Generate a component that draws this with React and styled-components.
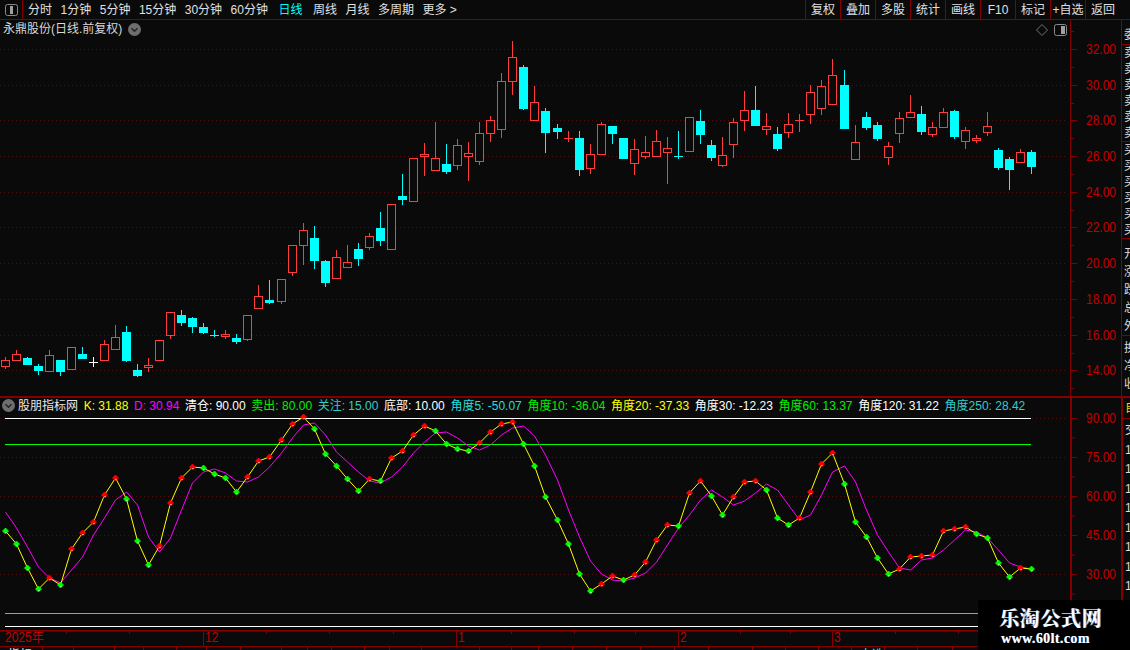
import React from 'react';
import styled, { createGlobalStyle } from 'styled-components';

const GlobalStyle = createGlobalStyle`
  html, body {
    margin: 0;
    background: #0a0a0a;
  }
`;

const RED_LINE = '#840000';
const AXIS_TEXT = '#c00000';
const UP = '#ff3c3c';
const DOWN = '#00ffff';
const FONT = '"Liberation Sans", "Noto Sans CJK SC", sans-serif';

const Page = styled.div`
  position: relative;
  width: 1130px;
  height: 650px;
  overflow: hidden;
  display: flex;
  flex-direction: column;
  background: #0a0a0a;
  color: #e0e0e0;
  font: 12px/1 ${FONT};
`;

const TopBar = styled.div`
  flex: none;
  height: 19px;
  display: flex;
  align-items: center;
  border-bottom: 1px solid ${RED_LINE};
`;

const ToggleBox = styled.div`
  flex: none;
  width: 23px;
  height: 19px;
  display: flex;
  align-items: center;
  justify-content: center;
  box-sizing: border-box;
  border-right: 1px solid ${RED_LINE};
`;

const Tabs = styled.div`
  display: flex;
  gap: 8.5px;
  padding-left: 5px;
`;

const Tab = styled.span`
  white-space: nowrap;
  color: ${(p) => (p.$active ? '#00ffff' : '#e0e0e0')};
  margin: ${(p) => (p.$active ? '0 2px' : '0')};
`;

const ToolButtons = styled.div`
  display: flex;
  margin-left: auto;
  margin-right: 10px;
`;

const ToolButton = styled.div`
  width: 35px;
  height: 19px;
  box-sizing: border-box;
  display: flex;
  align-items: center;
  justify-content: center;
  white-space: nowrap;
  border-left: 1px solid ${RED_LINE};
`;

const Pane = styled.div`
  flex: none;
  display: flex;
  height: ${(p) => p.$height}px;
  border-bottom: ${(p) => p.$rule}px solid ${RED_LINE};
`;

const ChartArea = styled.div`
  position: relative;
  width: 1070px;
  flex: none;
  svg {
    display: block;
  }
`;

const AxisBox = styled.div`
  flex: none;
  width: 51px;
  box-sizing: border-box;
  border-left: ${(p) => p.$rule}px solid ${RED_LINE};
  svg {
    display: block;
  }
`;

const Strip = styled.div`
  flex: none;
  width: 9px;
  box-sizing: border-box;
  overflow: hidden;
  border-left: ${(p) => p.$rule}px solid ${RED_LINE};
  display: flex;
  flex-direction: column;
`;

const StripSection = styled.div`
  flex: none;
  height: ${(p) => p.$height}px;
  box-sizing: border-box;
  overflow: hidden;
  padding: ${(p) => p.$top}px 0 0 2px;
  border-bottom: ${(p) => (p.$open ? 'none' : `1px solid ${RED_LINE}`)};
`;

const StripRow = styled.div`
  height: ${(p) => p.$step}px;
  line-height: ${(p) => p.$step}px;
  white-space: nowrap;
  color: ${(p) => p.$color || '#dcdcdc'};
`;

const ChartTitle = styled.div`
  position: absolute;
  left: 3px;
  top: 3px;
  display: flex;
  align-items: center;
  gap: 6px;
  height: 12px;
  color: #d8d8d8;
  white-space: nowrap;
`;

const ChartTools = styled.div`
  position: absolute;
  right: 3px;
  top: 4px;
  display: flex;
  align-items: center;
  gap: 6px;
`;

const Legend = styled.div`
  position: absolute;
  left: 2px;
  top: 1px;
  height: 13px;
  display: flex;
  align-items: center;
  gap: 5.65px;
  white-space: nowrap;
`;

const LegendItem = styled.span`
  color: ${(p) => p.$color};
`;

const LegendName = styled.span`
  margin-left: -2.65px;
  color: #e8e8e8;
`;

const DateAxis = styled.div`
  flex: none;
  height: 16px;
  border-bottom: 1px solid ${RED_LINE};
  svg {
    display: block;
  }
`;

const BottomTabs = styled.div`
  flex: 1;
  display: flex;
  overflow: hidden;
`;

const BottomTab = styled.div`
  flex: none;
  width: ${(p) => p.$width}px;
  box-sizing: border-box;
  padding: 2px 0 0 8px;
  white-space: nowrap;
  overflow: hidden;
  color: ${(p) => (p.$active ? '#00ffff' : '#e8e8e8')};
  border-right: 1px solid ${RED_LINE};
`;

const Watermark = styled.div`
  position: absolute;
  left: 978px;
  top: 600px;
  width: 152px;
  height: 50px;
  background: #000;
  color: #fff;
  font-family: "Liberation Serif", "Noto Serif CJK SC", "Noto Sans CJK SC", serif;
  font-weight: 700;
`;

const WatermarkName = styled.div`
  margin: 9px 0 0 21px;
  font-size: 20px;
  line-height: 20px;
  letter-spacing: 0.6px;
  white-space: nowrap;
  text-shadow: 1px 0 0 #6f8fd0;
`;

const WatermarkUrl = styled.div`
  margin: 3px 0 0 23px;
  font-size: 14px;
  line-height: 14px;
  letter-spacing: 0.4px;
  white-space: nowrap;
  text-shadow: 0.5px 0 0 #6f8fd0;
`;

// [wick top, wick bottom, body top, body bottom, kind]
const candles = [
  [357, 369, 360, 367, 'r'], [350, 361, 354, 361, 'r'], [357, 365, 358, 365, 'c'], [364, 375, 366, 371, 'c'],
  [350, 372, 355, 372, 'r'], [360, 376, 360, 372, 'c'], [347, 370, 347, 370, 'r'], [347, 359, 354, 359, 'c'],
  [357, 367, 362, 362, 'w'], [340, 361, 344, 361, 'r'], [325, 350, 337, 350, 'r'], [326, 362, 332, 361, 'c'],
  [364, 377, 370, 376, 'c'], [358, 372, 365, 368, 'r'], [340, 361, 340, 361, 'r'], [312, 339, 312, 336, 'r'],
  [310, 326, 315, 323, 'c'], [317, 333, 318, 327, 'c'], [323, 334, 327, 333, 'c'], [330, 337, 335, 335, 'c'],
  [330, 339, 334, 337, 'r'], [334, 344, 338, 342, 'c'], [315, 341, 315, 340, 'r'], [285, 309, 296, 309, 'r'],
  [280, 304, 300, 303, 'c'], [279, 304, 279, 302, 'r'], [245, 276, 245, 273, 'r'], [223, 265, 230, 246, 'r'],
  [226, 269, 238, 261, 'c'], [260, 287, 261, 283, 'c'], [250, 279, 257, 279, 'r'], [245, 268, 262, 268, 'r'],
  [243, 266, 249, 259, 'c'], [233, 250, 236, 248, 'r'], [212, 246, 228, 241, 'c'], [204, 250, 204, 250, 'r'],
  [174, 205, 196, 200, 'c'], [158, 202, 158, 202, 'r'], [143, 176, 154, 157, 'r'], [122, 171, 158, 171, 'r'],
  [144, 174, 164, 172, 'c'], [139, 170, 145, 166, 'r'], [142, 181, 153, 157, 'r'], [122, 165, 133, 162, 'r'],
  [116, 142, 120, 134, 'r'], [73, 138, 81, 130, 'r'], [41, 95, 57, 82, 'r'], [65, 110, 67, 109, 'c'],
  [86, 121, 102, 121, 'r'], [108, 153, 111, 133, 'c'], [124, 139, 128, 132, 'c'], [131, 142, 138, 138, 'r'],
  [131, 176, 138, 170, 'c'], [144, 174, 154, 169, 'r'], [122, 155, 124, 155, 'r'], [126, 144, 126, 134, 'c'],
  [138, 159, 138, 159, 'c'], [139, 175, 149, 164, 'r'], [136, 159, 152, 157, 'r'], [130, 157, 141, 157, 'r'],
  [137, 184, 148, 153, 'r'], [131, 159, 156, 156, 'c'], [117, 152, 117, 152, 'r'], [110, 144, 121, 135, 'c'],
  [140, 161, 145, 158, 'c'], [137, 167, 155, 166, 'r'], [118, 158, 122, 145, 'r'], [91, 131, 110, 121, 'r'],
  [86, 126, 110, 126, 'c'], [113, 135, 126, 130, 'r'], [127, 151, 134, 149, 'c'], [113, 138, 124, 133, 'r'],
  [114, 132, 120, 120, 'r'], [85, 124, 92, 115, 'r'], [80, 115, 86, 109, 'r'], [59, 105, 75, 105, 'r'],
  [70, 129, 85, 129, 'c'], [125, 160, 142, 160, 'r'], [112, 130, 117, 128, 'c'], [122, 141, 125, 139, 'c'],
  [142, 165, 146, 158, 'r'], [112, 143, 118, 134, 'r'], [95, 118, 112, 118, 'r'], [106, 135, 114, 132, 'c'],
  [122, 137, 127, 135, 'r'], [108, 128, 112, 128, 'r'], [110, 139, 111, 137, 'c'], [127, 149, 130, 142, 'r'],
  [135, 143, 138, 141, 'r'], [112, 136, 126, 133, 'r'], [148, 170, 150, 168, 'c'], [157, 190, 159, 170, 'c'],
  [149, 163, 152, 163, 'r'], [150, 174, 152, 167, 'c'],
];

const kLine = [
  531, 544, 568, 589, 578, 585, 549, 533, 522, 495, 478, 499, 541, 565, 546, 503, 478, 467, 468, 474,
  478, 492, 477, 461, 457, 440, 424, 417, 429, 454, 466, 479, 491, 479, 481, 458, 451, 435, 426, 431,
  444, 449, 451, 443, 432, 424, 422, 444, 466, 497, 520, 544, 574, 591, 584, 576, 580, 575, 562, 540,
  525, 526, 493, 481, 496, 515, 497, 482, 481, 490, 518, 525, 518, 492, 464, 453, 484, 522, 537, 558,
  574, 569, 557, 556, 555, 531, 529, 527, 534, 538, 563, 577, 568, 569,
];

const dLine = [
  512, 528, 547, 567, 578, 583, 570, 557, 535, 518, 500, 492, 505, 537, 552, 538, 510, 483, 472, 469,
  473, 481, 482, 477, 467, 453, 438, 425, 423, 435, 452, 462, 472, 481, 483, 477, 467, 453, 442, 433,
  432, 438, 446, 450, 445, 435, 428, 426, 436, 455, 480, 510, 537, 561, 574, 580, 581, 578, 573, 562,
  545, 528, 515, 500, 490, 497, 505, 501, 493, 484, 490, 505, 520, 515, 495, 472, 466, 482, 510, 535,
  552, 568, 570, 560, 558, 550, 540, 530, 532, 538, 550, 563, 567, 569,
];

const priceLevels = [
  ['32.00', 49], ['30.00', 85], ['28.00', 120], ['26.00', 156], ['24.00', 192],
  ['22.00', 227], ['20.00', 263], ['18.00', 299], ['16.00', 335], ['14.00', 370],
];

const kdjLevels = [
  ['90.00', 418], ['75.00', 457], ['60.00', 496], ['45.00', 535], ['30.00', 574],
];

const xAt = (i) => Math.floor(5 + 11.04 * i);

const colourOf = { r: UP, c: DOWN, w: '#ffffff' };

const Candle = ({ data, i }) => {
  const [wickTop, wickBottom, bodyTop, bodyBottom, kind] = data;
  const x = xAt(i) + 0.5;
  const colour = colourOf[kind];
  const height = bodyBottom - bodyTop;
  return (
    <g stroke={colour} shapeRendering="crispEdges">
      <line x1={x} x2={x} y1={wickTop} y2={bodyTop} />
      <line x1={x} x2={x} y1={bodyBottom} y2={wickBottom} />
      {height === 0 ? (
        <line x1={x - 4.5} x2={x + 4.5} y1={bodyTop + 0.5} y2={bodyTop + 0.5} />
      ) : kind === 'c' ? (
        <rect x={x - 4.5} y={bodyTop} width={9} height={height} fill={colour} stroke="none" />
      ) : (
        <rect x={x - 4} y={bodyTop + 0.5} width={8} height={height - 1} fill="#0a0a0a" />
      )}
    </g>
  );
};

const DottedLevel = ({ y, width = 1067 }) => (
  <line x1={0} x2={width} y1={y + 0.5} y2={y + 0.5} stroke="#4e0c0c" strokeDasharray="1 3" shapeRendering="crispEdges" />
);

const PriceChart = () => (
  <svg width="1070" height="376" viewBox="0 20 1070 376">
    {priceLevels.map(([label, y]) => <DottedLevel key={label} y={y} />)}
    {candles.map((c, i) => <Candle key={i} data={c} i={i} />)}
  </svg>
);

const HLine = ({ y, colour }) => (
  <line x1={5} x2={1031} y1={y + 0.5} y2={y + 0.5} stroke={colour} shapeRendering="crispEdges" />
);

const KdjChart = () => {
  const points = (line) => line.map((y, i) => `${xAt(i) + 0.5},${y}`).join(' ');
  return (
    <svg width="1070" height="232" viewBox="0 398 1070 232">
      {kdjLevels.map(([label, y]) => <DottedLevel key={label} y={y} />)}
      <HLine y={418} colour="#ffffff" />
      <HLine y={444} colour="#00ff00" />
      <HLine y={613} colour="#33cccc" />
      <HLine y={626} colour="#ffffff" />
      <polyline points={points(dLine)} fill="none" stroke="#ff00ff" />
      <polyline points={points(kLine)} fill="none" stroke="#ffff00" />
      {kLine.map((y, i) => {
        const x = xAt(i) + 0.5;
        const rising = i > 0 && y < kLine[i - 1];
        return (
          <g key={i}>
            <polygon
              points={`${x - 3},${y} ${x},${y - 3} ${x + 3},${y} ${x},${y + 3}`}
              fill={rising ? '#ff0000' : '#00ff00'}
              stroke={rising ? '#ff0000' : '#00ff00'}
              strokeWidth="0.8"
            />
            <rect x={x} y={y + 1} width={1} height={1} fill="#ffffff" />
          </g>
        );
      })}
    </svg>
  );
};

// values on the axis are drawn 10px tall on a 12px width
const AxisLabel = ({ x, y, anchor = 'end', children }) => (
  <text
    transform={`translate(${x} ${y}) scale(1 1.15)`}
    textAnchor={anchor}
    fill={AXIS_TEXT}
    fontSize="12"
    fontFamily={FONT}
  >
    {children}
  </text>
);

const PriceAxis = () => (
  <svg width="50" height="376" viewBox="1071 20 50 376">
    {priceLevels.map(([label, y], i) => (
      <g key={label}>
        <line x1={1071} x2={1077} y1={y + 0.5} y2={y + 0.5} stroke={RED_LINE} />
        {i < priceLevels.length - 1 && (
          <line x1={1071} x2={1074} y1={Math.round((y + priceLevels[i + 1][1]) / 2) + 0.5} y2={Math.round((y + priceLevels[i + 1][1]) / 2) + 0.5} stroke={RED_LINE} />
        )}
        <AxisLabel x={1116} y={y + 5}>{label}</AxisLabel>
      </g>
    ))}
    <line x1={1071} x2={1074} y1={31.5} y2={31.5} stroke={RED_LINE} />
    <line x1={1071} x2={1074} y1={388.5} y2={388.5} stroke={RED_LINE} />
  </svg>
);

const KdjAxis = () => (
  <svg width="49" height="232" viewBox="1072 398 49 232">
    {kdjLevels.map(([label, y]) => (
      <g key={label}>
        <line x1={1072} x2={1077} y1={y + 0.5} y2={y + 0.5} stroke={RED_LINE} />
        <line x1={1072} x2={1075} y1={y + 20} y2={y + 20} stroke={RED_LINE} />
        <AxisLabel x={1116} y={y + 5}>{label}</AxisLabel>
      </g>
    ))}
  </svg>
);

const DateChart = () => (
  <svg width="1130" height="16" viewBox="0 630 1130 16">
    <line x1={0} x2={1130} y1={630.5} y2={630.5} stroke={RED_LINE} strokeWidth="2" />
    {[
      [203, '12'], [456, '1'], [678, '2'], [832, '3'],
    ].map(([x, label]) => (
      <g key={x}>
        <line x1={x + 0.5} x2={x + 0.5} y1={631} y2={646} stroke={RED_LINE} />
        <AxisLabel x={x + 2} y={642} anchor="start">{label}</AxisLabel>
      </g>
    ))}
    {[66, 129, 266, 329, 393, 511, 574, 635, 740, 790, 895, 958].map((x) => (
      <line key={x} x1={x + 0.5} x2={x + 0.5} y1={631} y2={634} stroke={RED_LINE} />
    ))}
    <AxisLabel x={5} y={642} anchor="start">2025年</AxisLabel>
  </svg>
);

const ChevronBadge = () => (
  <svg width="13" height="13" viewBox="0 0 13 13">
    <circle cx="6.5" cy="6.5" r="6.5" fill="#6e6e6e" />
    <path d="M3.5 5.2 L6.5 8.2 L9.5 5.2" fill="none" stroke="#222" strokeWidth="1.4" />
  </svg>
);

const SplitIcon = ({ side }) => (
  <svg width="13" height="12" viewBox="0 0 13 12">
    <rect x="0.5" y="0.5" width="12" height="11" rx="2" fill="#0a0a0a" stroke="#8a8a8a" />
    <rect x={side === 'left' ? 5 : 7} y="2" width={side === 'left' ? 3 : 4} height="8" fill="#a0a0a0" />
  </svg>
);

const DiamondIcon = () => (
  <svg width="12" height="12" viewBox="0 0 12 12">
    <path d="M6 0.5 L11.5 6 L6 11.5 L0.5 6 Z" fill="none" stroke="#707070" />
  </svg>
);

const periodTabs = ['分时', '1分钟', '5分钟', '15分钟', '30分钟', '60分钟', '日线', '周线', '月线', '多周期', '更多 >'];
const toolButtons = ['复权', '叠加', '多股', '统计', '画线', 'F10', '标记', '+自选', '返回'];

const legendItems = [
  ['K: 31.88', '#ffff00'],
  ['D: 30.94', '#ff00ff'],
  ['清仓: 90.00', '#ffffff'],
  ['卖出: 80.00', '#00ee00'],
  ['关注: 15.00', '#33cccc'],
  ['底部: 10.00', '#ffffff'],
  ['角度5: -50.07', '#22dddd'],
  ['角度10: -36.04', '#00ee00'],
  ['角度20: -37.33', '#ffff00'],
  ['角度30: -12.23', '#ffffff'],
  ['角度60: 13.37', '#00ee00'],
  ['角度120: 31.22', '#ffffff'],
  ['角度250: 28.42', '#33cccc'],
];

const priceStrip = [
  { height: 25, top: 7, step: 16, rows: ['委'] },
  { height: 97, top: 0, step: 16, rows: ['卖', '卖', '卖', '卖', '卖', '卖'] },
  { height: 97, top: 0, step: 16, rows: ['买', '买', '买', '买', '买', '买'] },
  { height: 97, top: 6, step: 18, rows: ['开', '涨', '跌', '总', '外'] },
  { height: 60, top: 3, step: 18, rows: ['换', '净', '收'], open: true },
];

const kdjStrip = ['1', '1', '1', '1', '1', '1', '1', '1', '1', '1'];

const bottomTabs = [
  ['指标', 43], ['RSI', 31], ['MACD', 41], ['WR', 29], ['KDJ', 33], ['VR', 30], ['OBV', 34], ['BOLL', 41],
  ['VR', 26], ['BR', 24], ['BIAS', 33], ['AR', 25], ['DMI', 32], ['DMA', 58], ['PSY', 32], ['CR', 27],
  ['MTM', 34], ['BBI', 34], ['ASI', 34], ['CCI', 34], ['EMV', 34], ['WVAD', 44], ['CYR', 33],
  ['SKDJ', 33], ['TRIX', 33], ['自选', 33, true], ['MA', 33], ['VOL', 35], ['BBI', 35], ['KD', 35],
];

const App = () => (
  <Page>
    <GlobalStyle />
    <TopBar>
      <ToggleBox><SplitIcon side="left" /></ToggleBox>
      <Tabs>
        {periodTabs.map((t) => <Tab key={t} $active={t === '日线'}>{t}</Tab>)}
      </Tabs>
      <ToolButtons>
        {toolButtons.map((t) => <ToolButton key={t}>{t}</ToolButton>)}
      </ToolButtons>
    </TopBar>

    <Pane $height={376} $rule={2}>
      <ChartArea>
        <PriceChart />
        <ChartTitle>永鼎股份(日线.前复权)<ChevronBadge /></ChartTitle>
        <ChartTools>
          <DiamondIcon />
          <SplitIcon side="right" />
        </ChartTools>
      </ChartArea>
      <AxisBox $rule={1}><PriceAxis /></AxisBox>
      <Strip $rule={1}>
        {priceStrip.map((s, i) => (
          <StripSection key={i} $height={s.height} $top={s.top} $open={s.open}>
            {s.rows.map((r, j) => <StripRow key={j} $step={s.step}>{r}</StripRow>)}
          </StripSection>
        ))}
      </Strip>
    </Pane>

    <Pane $height={232} $rule={0}>
      <ChartArea>
        <KdjChart />
        <Legend>
          <ChevronBadge />
          <LegendName>股朋指标网</LegendName>
          {legendItems.map(([text, colour]) => <LegendItem key={text} $color={colour}>{text}</LegendItem>)}
        </Legend>
      </ChartArea>
      <AxisBox $rule={2}><KdjAxis /></AxisBox>
      <Strip $rule={2}>
        <StripSection $height={21} $top={3}><StripRow $step={14} $color="#e0e000">自</StripRow></StripSection>
        <StripSection $height={211} $top={2} $open>
          <StripRow $step={19.5}>交</StripRow>
          {kdjStrip.map((r, i) => <StripRow key={i} $step={19.5}>{r}</StripRow>)}
        </StripSection>
      </Strip>
    </Pane>

    <DateAxis><DateChart /></DateAxis>

    <BottomTabs>
      {bottomTabs.map(([label, width, active], i) => (
        <BottomTab key={i} $width={width} $active={active}>{label}</BottomTab>
      ))}
    </BottomTabs>

    <Watermark>
      <WatermarkName>乐淘公式网</WatermarkName>
      <WatermarkUrl>www.60lt.com</WatermarkUrl>
    </Watermark>
  </Page>
);

export default App;
